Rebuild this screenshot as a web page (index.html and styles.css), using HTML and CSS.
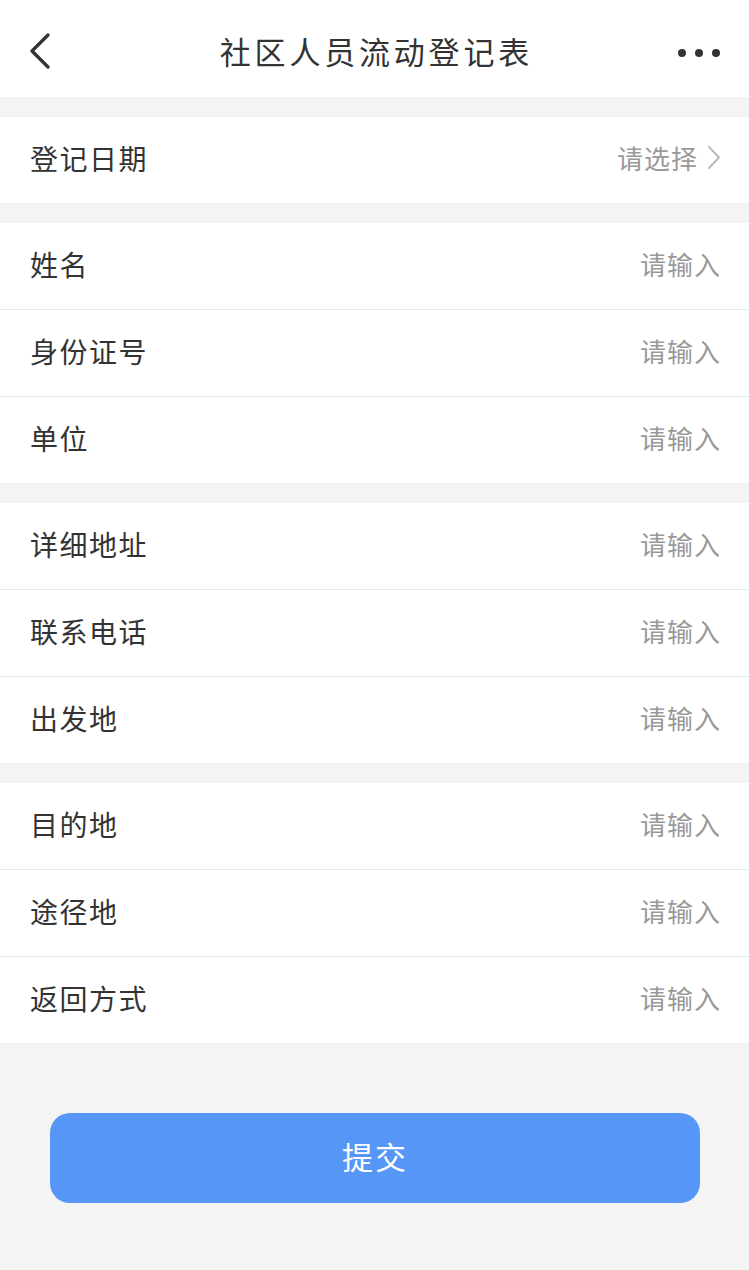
FILE: index.html
```html
<!DOCTYPE html>
<html lang="zh-CN">
<head>
<meta charset="UTF-8">
<title>社区人员流动登记表</title>
<link rel="stylesheet" href="styles.css">
</head>
<body>
<div class="header">
  <span class="back">
    <svg width="22" height="36" viewBox="0 0 22 36"><polyline points="19,2 3,18 19,34" fill="none" stroke="#333" stroke-width="3.2" stroke-linecap="round" stroke-linejoin="round"/></svg>
  </span>
  <h1 class="title">社区人员流动登记表</h1>
  <span class="more"><i></i><i></i><i></i></span>
</div>

<div class="group">
  <div class="row">
    <span class="label">登记日期</span>
    <span class="value">请选择
      <svg class="arrow" width="14" height="25" viewBox="0 0 14 25"><polyline points="2,2 12,12.5 2,23" fill="none" stroke="#bbb" stroke-width="2" stroke-linecap="round" stroke-linejoin="round"/></svg>
    </span>
  </div>
</div>

<div class="group">
  <div class="row"><span class="label">姓名</span><span class="value">请输入</span></div>
  <div class="row"><span class="label">身份证号</span><span class="value">请输入</span></div>
  <div class="row"><span class="label">单位</span><span class="value">请输入</span></div>
</div>

<div class="group">
  <div class="row"><span class="label">详细地址</span><span class="value">请输入</span></div>
  <div class="row"><span class="label">联系电话</span><span class="value">请输入</span></div>
  <div class="row"><span class="label">出发地</span><span class="value">请输入</span></div>
</div>

<div class="group">
  <div class="row"><span class="label">目的地</span><span class="value">请输入</span></div>
  <div class="row"><span class="label">途径地</span><span class="value">请输入</span></div>
  <div class="row"><span class="label">返回方式</span><span class="value">请输入</span></div>
</div>

<div class="footer">
  <button class="submit" type="button">提交</button>
</div>
</body>
</html>
```

FILE: styles.css
```css
body {
	margin: 0;
	background-color: #f4f4f4;
	font-family: "Noto Sans CJK SC", "Noto Sans", sans-serif;
	color: #333;
}

.header {
	height: 97px;
	box-sizing: border-box;
	padding: 4px 29px 0 29px;
	background-color: #fff;
	display: flex;
	align-items: center;
	justify-content: space-between;
}

.back {
	width: 60px;
	display: flex;
	align-items: center;
}

.title {
	margin: 0 -3.8px 0 0;
	font-size: 31px;
	font-weight: normal;
	letter-spacing: 3.8px;
	color: #333;
}

.more {
	width: 60px;
	padding-top: 5px;
	display: flex;
	justify-content: flex-end;
	gap: 9px;
}

.more i {
	width: 8px;
	height: 8px;
	border-radius: 50%;
	background-color: #333;
}

.group {
	margin-top: 20px;
	background-color: #fff;
}

.row {
	height: 81px;
	padding: 0 29px 5px 30px;
	display: flex;
	align-items: center;
	justify-content: space-between;
	border-bottom: 1px solid #e6ebf1;
}

.row:last-child {
	border-bottom: none;
}

.label {
	font-size: 28px;
	letter-spacing: 1.5px;
}

.value {
	font-size: 26px;
	letter-spacing: 1px;
	margin-right: -1px;
	color: #999;
	display: flex;
	align-items: center;
}

.arrow {
	margin-left: 9px;
}

.footer {
	padding: 70px 49px 0 50px;
}

.submit {
	display: block;
	width: 100%;
	height: 90px;
	padding: 0 0 5px;
	border: none;
	border-radius: 20px;
	background-color: #5596f6;
	color: #fff;
	font-family: inherit;
	font-size: 31px;
	letter-spacing: 2px;
}
```
